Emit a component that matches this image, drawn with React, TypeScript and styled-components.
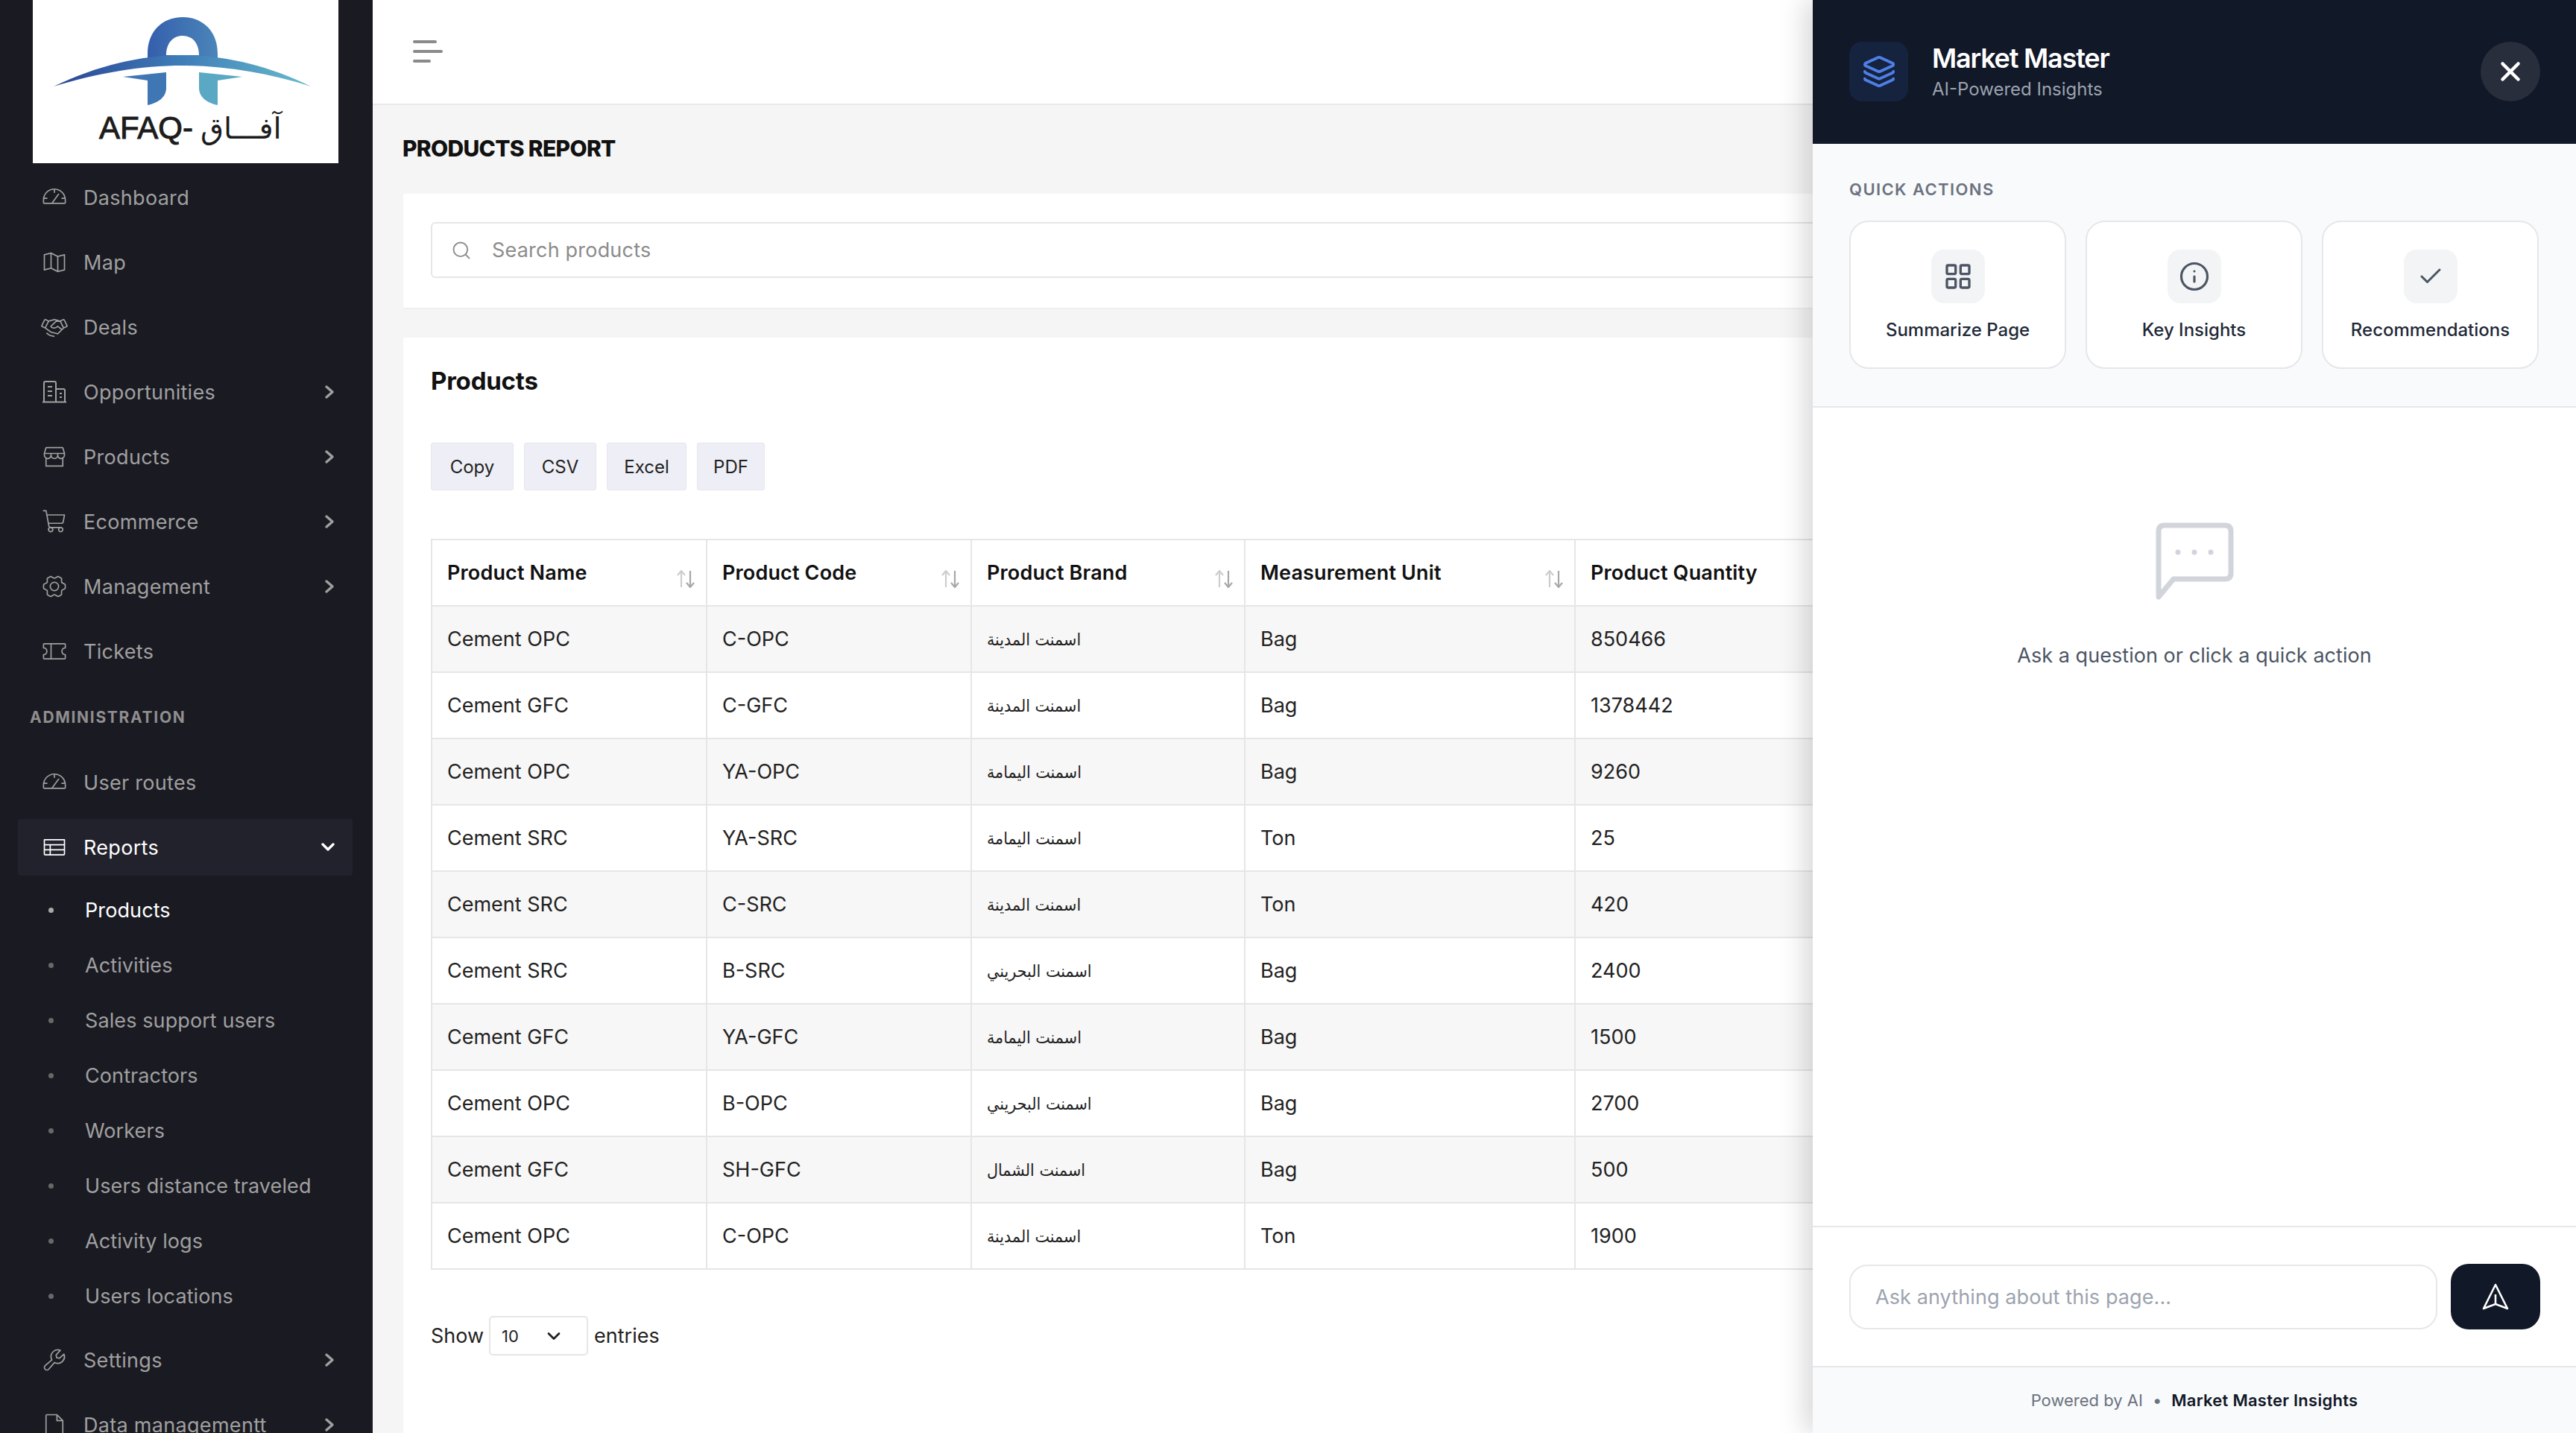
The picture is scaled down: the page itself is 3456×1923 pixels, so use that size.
import React from "react"
import styled, { createGlobalStyle } from "styled-components"
import { ChevronDown, Search, X, LayoutGrid, Info, Check, Layers } from "lucide-react"
import {
  PiGaugeLight,
  PiMapTrifoldLight,
  PiHandshakeLight,
  PiStorefrontLight,
  PiShoppingCartLight,
  PiGearSixLight,
  PiTicketLight,
  PiWrenchLight,
  PiFileLight,
  PiTableLight,
} from "react-icons/pi"

const GlobalStyle = createGlobalStyle`
  html, body {
    margin: 0;
    padding: 0;
    height: 100%;
    overflow: hidden;
    background: #f5f5f5;
    font-family: "Inter", "DejaVu Sans", sans-serif;
  }
  * { box-sizing: border-box; }
`

const Shell = styled.div`
  display: flex;
  width: 3456px;
  height: 1923px;
  overflow: hidden;
  position: relative;
`

const Sidebar = styled.aside`
  width: 500px;
  flex-shrink: 0;
  height: 100%;
  overflow: hidden;
  background: #1a1a22;
  padding: 0 27px 0 24px;
`

const LogoBox = styled.div`
  width: 410px;
  height: 219px;
  margin: 0 0 8px 20px;
  background: #fff;
`

const NavList = styled.nav`
  display: flex;
  flex-direction: column;
  gap: 11px;
`

const NavItem = styled.div<{ $active?: boolean }>`
  height: 76px;
  flex-shrink: 0;
  display: flex;
  align-items: center;
  padding: 0 24px 0 31px;
  border-radius: 4px;
  font-size: 27px;
  letter-spacing: 0.3px;
  color: ${({ $active }) => ($active ? "#ffffff" : "#a0a0a0")};
  background: ${({ $active }) => ($active ? "#22222c" : "transparent")};
`

const NavIcon = styled.span`
  width: 36px;
  height: 36px;
  margin-right: 21px;
  flex-shrink: 0;
  display: flex;
  align-items: center;
  justify-content: center;
  font-size: 36px;
`

const NavLabel = styled.span`
  flex: 1;
  white-space: nowrap;
`

const SectionLabel = styled.div`
  height: 78px;
  flex-shrink: 0;
  display: flex;
  align-items: center;
  padding-left: 16px;
  font-size: 21px;
  font-weight: 700;
  letter-spacing: 1.7px;
  color: #8f8f8f;
`

const SubList = styled.div`
  display: flex;
  flex-direction: column;
  margin-top: -2px;
`

const SubItem = styled.div<{ $active?: boolean }>`
  height: 74px;
  display: flex;
  align-items: center;
  padding-left: 41px;
  font-size: 27px;
  letter-spacing: 0.1px;
  color: ${({ $active }) => ($active ? "#ffffff" : "#a0a0a0")};
`

const SubDot = styled.span<{ $active?: boolean }>`
  width: 7px;
  height: 7px;
  border-radius: 50%;
  margin-right: 42px;
  background: ${({ $active }) => ($active ? "#a8a8a8" : "#686868")};
`

const Main = styled.main`
  flex: 1;
  min-width: 0;
  display: flex;
  flex-direction: column;
`

const TopBar = styled.header`
  height: 141px;
  flex-shrink: 0;
  background: #fff;
  border-bottom: 2px solid #e8e8e8;
  display: flex;
  align-items: center;
  padding: 0 0 2px 54px;
`

const MenuIcon = styled.div`
  display: flex;
  flex-direction: column;
  gap: 9px;
`

const MenuLine = styled.span<{ $w: number }>`
  display: block;
  height: 4px;
  border-radius: 2px;
  background: #8a8a8a;
  width: ${({ $w }) => $w}px;
`

const Content = styled.div`
  flex: 1;
  min-height: 0;
  padding: 0 40px 0 41px;
`

const PageTitle = styled.h1`
  margin: 0;
  height: 119px;
  display: flex;
  align-items: center;
  padding: 0 0 4px 0;
  font-size: 30px;
  font-weight: 800;
  letter-spacing: -0.7px;
  margin-left: -1px;
  color: #111;
`

const Card = styled.section`
  background: #fff;
  border-bottom: 2px solid #efefef;
  margin-bottom: 38px;
`

const SearchCard = styled(Card)`
  height: 155px;
  padding: 38px 37px;
`

const SearchBox = styled.div`
  height: 75px;
  border: 2px solid #e6e6e6;
  border-radius: 6px;
  display: flex;
  align-items: center;
  padding-left: 25px;
  color: #8c8c8c;
  font-size: 27px;
  letter-spacing: 0.2px;
  gap: 27px;
`

const ProductsCard = styled(Card)`
  padding: 37px 37px 0;
  height: 1500px;
`

const CardTitle = styled.h2`
  margin: 0 0 63px;
  height: 41px;
  display: flex;
  align-items: center;
  font-size: 33px;
  font-weight: 700;
  letter-spacing: -0.2px;
  color: #111;
`

const ExportRow = styled.div`
  display: flex;
  gap: 14px;
  margin-bottom: 65px;
`

const ExportButton = styled.button<{ $w: number }>`
  width: ${({ $w }) => $w}px;
  height: 64px;
  padding: 0;
  border: 1px solid #e6e6ee;
  border-radius: 3px;
  background: #eeeef6;
  color: #222;
  font-family: inherit;
  font-size: 24px;
`

const Table = styled.table`
  width: 100%;
  table-layout: fixed;
  border-collapse: collapse;
  border: 2px solid #e6e6e6;
`

const HeadCell = styled.th<{ $w?: number }>`
  width: ${({ $w }) => ($w ? `${$w}px` : "auto")};
  height: 89px;
  padding: 0 14px 0 20px;
  border: 2px solid #e6e6e6;
  text-align: left;
  font-size: 27px;
  font-weight: 600;
  letter-spacing: 0.15px;
  color: #111;
`

const HeadInner = styled.div`
  display: flex;
  justify-content: space-between;
  align-items: center;
`

const SortIcon = styled.svg`
  width: 26px;
  height: 24px;
  margin-top: 16px;
  flex-shrink: 0;
`

const Row = styled.tr<{ $odd: boolean }>`
  background: ${({ $odd }) => ($odd ? "#f7f7f7" : "#fff")};
`

const Cell = styled.td`
  height: 89px;
  padding: 0 20px;
  border: 2px solid #e6e6e6;
  font-size: 27px;
  color: #222;
  white-space: nowrap;
`

const ArabicCell = styled(Cell)`
  font-family: "DejaVu Sans Condensed", "DejaVu Sans", sans-serif;
  font-size: 23px;
`

const LengthRow = styled.div`
  margin-top: 62px;
  display: flex;
  align-items: center;
  font-size: 27px;
  color: #222;
`

const LengthSelect = styled.div`
  width: 133px;
  height: 53px;
  margin: 0 8px 0 7px;
  border: 2px solid #e6e6e6;
  border-radius: 5px;
  display: flex;
  align-items: center;
  justify-content: space-between;
  padding: 0 30px 0 15px;
  font-size: 22px;
`

const Panel = styled.aside`
  position: absolute;
  top: 0;
  right: 0;
  bottom: 0;
  width: 1024px;
  display: flex;
  flex-direction: column;
  background: #fff;
  box-shadow: -10px 0 34px rgba(0, 0, 0, 0.16);
`

const PanelHeader = styled.header`
  height: 193px;
  flex-shrink: 0;
  background: #111827;
  display: flex;
  align-items: center;
  padding: 0 48px 2px 49px;
`

const BrandIcon = styled.div`
  width: 79px;
  height: 80px;
  border-radius: 17px;
  background: #15233f;
  color: #4f7fe6;
  display: flex;
  align-items: center;
  justify-content: center;
  margin-right: 32px;
`

const BrandText = styled.div`
  flex: 1;
  display: flex;
  flex-direction: column;
  gap: 5px;
`

const BrandTitle = styled.div`
  font-size: 36px;
  font-weight: 600;
  line-height: 44px;
  letter-spacing: -1.2px;
  color: #fff;
`

const BrandSub = styled.div`
  font-size: 24px;
  line-height: 30px;
  color: #9ca3af;
`

const CloseButton = styled.div`
  width: 80px;
  height: 80px;
  border-radius: 50%;
  background: #282e3c;
  color: #fff;
  display: flex;
  align-items: center;
  justify-content: center;
`

const QuickSection = styled.section`
  height: 354px;
  flex-shrink: 0;
  background: #f9fafb;
  border-bottom: 2px solid #e5e7eb;
  padding: 48px 48px 0 49px;
`

const QuickLabel = styled.div`
  font-size: 22px;
  line-height: 26px;
  font-weight: 600;
  letter-spacing: 1.4px;
  color: #6b7280;
  margin-bottom: 29px;
`

const QuickGrid = styled.div`
  display: grid;
  grid-template-columns: repeat(3, 291px);
  gap: 26px;
`

const QuickCard = styled.div`
  height: 199px;
  background: #fff;
  border: 2px solid #e5e7eb;
  border-radius: 26px;
  display: flex;
  flex-direction: column;
  align-items: center;
  padding-top: 37px;
`

const QuickIcon = styled.div`
  width: 72px;
  height: 72px;
  border-radius: 17px;
  background: #f3f4f6;
  color: #4b5563;
  display: flex;
  align-items: center;
  justify-content: center;
  margin-bottom: 21px;
`

const QuickText = styled.div`
  font-size: 24px;
  line-height: 30px;
  font-weight: 500;
  color: #1f2937;
`

const Conversation = styled.div`
  flex: 1;
  min-height: 0;
  display: flex;
  flex-direction: column;
  align-items: center;
  padding-top: 154px;
`

const EmptyText = styled.div`
  margin-top: 56px;
  font-size: 27px;
  line-height: 34px;
  letter-spacing: 0.05px;
  color: #4b5563;
`

const Composer = styled.div`
  height: 190px;
  flex-shrink: 0;
  border-top: 2px solid #e5e7eb;
  border-bottom: 2px solid #e5e7eb;
  display: flex;
  align-items: center;
  gap: 18px;
  padding: 0 48px 0 49px;
`

const ComposerInput = styled.div`
  flex: 1;
  height: 87px;
  border: 2px solid #e5e7eb;
  border-radius: 24px;
  display: flex;
  align-items: center;
  padding-left: 33px;
  font-size: 27px;
  letter-spacing: 0.1px;
  color: #9ca3af;
`

const SendButton = styled.div`
  width: 120px;
  height: 88px;
  border-radius: 24px;
  background: #111827;
  color: #fff;
  display: flex;
  align-items: center;
  justify-content: center;
`

const PanelFooter = styled.footer`
  flex: 0 0 88px;
  background: #f9fafb;
  display: flex;
  align-items: center;
  justify-content: center;
  font-size: 22px;
  color: #6b7280;
`

const FooterStrong = styled.span`
  color: #111827;
  font-weight: 600;
  letter-spacing: 0.25px;
`

const FooterDot = styled.span`
  margin: 0 13px;
`

const Caret = ({ down }: { down?: boolean }) =>
  down ? (
    <svg width="18" height="12" viewBox="0 0 18 12" fill="none" stroke="currentColor" strokeWidth="3.4" strokeLinecap="round" strokeLinejoin="round">
      <polyline points="2,2 9,9 16,2" />
    </svg>
  ) : (
    <svg width="14" height="20" viewBox="0 0 14 20" fill="none" stroke="currentColor" strokeWidth="3.4" strokeLinecap="round" strokeLinejoin="round">
      <polyline points="3,3 11,10 3,17" />
    </svg>
  )

const BuildingsIcon = () => (
  <svg width="34" height="30" viewBox="0 0 34 30" fill="none" stroke="currentColor" strokeWidth="2">
    <path d="M1 28.5 H33" />
    <path d="M3 28.5 V3 Q3 1 5 1 H17 Q19 1 19 3 V28.5" />
    <path d="M19 11 H29 Q31 11 31 13 V28.5" />
    <path d="M8 8 H14 M8 14 H14 M8 20 H14 M24 17 H27 M24 22 H27" />
  </svg>
)

const SendIcon = () => (
  <svg width="36" height="36" viewBox="0 0 36 36" fill="none" stroke="currentColor" strokeWidth="2.6" strokeLinejoin="round">
    <path d="M18 2 L34 34 L18 28 L2 34 Z" />
    <path d="M18 15 V28" />
  </svg>
)

const Logo = () => (
  <svg width="410" height="219" viewBox="44 0 410 219">
    <defs>
      <linearGradient id="swoosh" gradientUnits="userSpaceOnUse" x1="72" y1="0" x2="417" y2="0">
        <stop offset="0" stopColor="#2a4595" />
        <stop offset="0.5" stopColor="#3f7db8" />
        <stop offset="1" stopColor="#68bccb" />
      </linearGradient>
      <linearGradient id="arch" gradientUnits="userSpaceOnUse" x1="198" y1="0" x2="292" y2="0">
        <stop offset="0" stopColor="#355fac" />
        <stop offset="1" stopColor="#4a85b9" />
      </linearGradient>
    </defs>
    <path
      fillRule="evenodd"
      fill="url(#arch)"
      d="M198 84 L198 72 C198 42 218 23 245 23 C272 23 292 42 292 72 L292 84 Z M223 74 L267 74 C267 58 258 48 245 48 C232 48 223 58 223 74 Z"
    />
    <path
      fill="url(#swoosh)"
      d="M72 116 C130 88 190 74 245 74 C300 74 360 88 417 116 C360 98 300 88 245 88 C190 88 130 98 72 116 Z"
    />
    <path fill="#3f76b4" d="M165 103 L223 97 L223 118 C223 130 213 138 198 141 L198 108 Z" />
    <path fill="#5aa8c4" d="M325 103 L267 97 L267 118 C267 130 277 138 292 141 L292 108 Z" />
    <text x="133" y="186" fontFamily="Liberation Sans, sans-serif" fontSize="42" fontWeight="500" fill="#1c1c1c" stroke="#1c1c1c" strokeWidth="1">
      AFAQ-
    </text>
    <text x="269" y="186" fontFamily="DejaVu Sans, sans-serif" fontSize="40" fill="#1c1c1c">
      آفـــاق
    </text>
  </svg>
)

const columns = [
  { label: "Product Name", width: 369 },
  { label: "Product Code", width: 355 },
  { label: "Product Brand", width: 367 },
  { label: "Measurement Unit", width: 443 },
]

const rows = [
  ["Cement OPC", "C-OPC", "اسمنت المدينة", "Bag", "850466"],
  ["Cement GFC", "C-GFC", "اسمنت المدينة", "Bag", "1378442"],
  ["Cement OPC", "YA-OPC", "اسمنت اليمامة", "Bag", "9260"],
  ["Cement SRC", "YA-SRC", "اسمنت اليمامة", "Ton", "25"],
  ["Cement SRC", "C-SRC", "اسمنت المدينة", "Ton", "420"],
  ["Cement SRC", "B-SRC", "اسمنت البحريني", "Bag", "2400"],
  ["Cement GFC", "YA-GFC", "اسمنت اليمامة", "Bag", "1500"],
  ["Cement OPC", "B-OPC", "اسمنت البحريني", "Bag", "2700"],
  ["Cement GFC", "SH-GFC", "اسمنت الشمال", "Bag", "500"],
  ["Cement OPC", "C-OPC", "اسمنت المدينة", "Ton", "1900"],
]

const reportLinks = [
  "Products",
  "Activities",
  "Sales support users",
  "Contractors",
  "Workers",
  "Users distance traveled",
  "Activity logs",
  "Users locations",
]

const SortArrows = () => (
  <SortIcon viewBox="0 0 26 24" fill="none" strokeWidth="2.2">
    <path d="M7 23 V2 M2 7 L7 1 L12 7" stroke="#cdcdcd" />
    <path d="M19 1 V22 M14 17 L19 23 L24 17" stroke="#a8a8a8" />
  </SortIcon>
)

const App: React.FC = () => {
  return (
    <Shell>
      <GlobalStyle />
      <Sidebar>
        <LogoBox>
          <Logo />
        </LogoBox>
        <NavList>
          <NavItem>
            <NavIcon><PiGaugeLight /></NavIcon>
            <NavLabel>Dashboard</NavLabel>
          </NavItem>
          <NavItem>
            <NavIcon><PiMapTrifoldLight /></NavIcon>
            <NavLabel>Map</NavLabel>
          </NavItem>
          <NavItem>
            <NavIcon><PiHandshakeLight /></NavIcon>
            <NavLabel>Deals</NavLabel>
          </NavItem>
          <NavItem>
            <NavIcon><BuildingsIcon /></NavIcon>
            <NavLabel>Opportunities</NavLabel>
            <Caret />
          </NavItem>
          <NavItem>
            <NavIcon><PiStorefrontLight /></NavIcon>
            <NavLabel>Products</NavLabel>
            <Caret />
          </NavItem>
          <NavItem>
            <NavIcon><PiShoppingCartLight /></NavIcon>
            <NavLabel>Ecommerce</NavLabel>
            <Caret />
          </NavItem>
          <NavItem>
            <NavIcon><PiGearSixLight /></NavIcon>
            <NavLabel>Management</NavLabel>
            <Caret />
          </NavItem>
          <NavItem>
            <NavIcon><PiTicketLight /></NavIcon>
            <NavLabel>Tickets</NavLabel>
          </NavItem>
          <SectionLabel>ADMINISTRATION</SectionLabel>
          <NavItem>
            <NavIcon><PiGaugeLight /></NavIcon>
            <NavLabel>User routes</NavLabel>
          </NavItem>
          <NavItem $active>
            <NavIcon><PiTableLight /></NavIcon>
            <NavLabel>Reports</NavLabel>
            <Caret down />
          </NavItem>
          <SubList>
            {reportLinks.map((link, i) => (
              <SubItem key={link} $active={i === 0}>
                <SubDot $active={i === 0} />
                {link}
              </SubItem>
            ))}
          </SubList>
          <NavItem>
            <NavIcon><PiWrenchLight /></NavIcon>
            <NavLabel>Settings</NavLabel>
            <Caret />
          </NavItem>
          <NavItem>
            <NavIcon><PiFileLight /></NavIcon>
            <NavLabel>Data managementt</NavLabel>
            <Caret />
          </NavItem>
        </NavList>
      </Sidebar>

      <Main>
        <TopBar>
          <MenuIcon>
            <MenuLine $w={32} />
            <MenuLine $w={40} />
            <MenuLine $w={24} />
          </MenuIcon>
        </TopBar>
        <Content>
          <PageTitle>PRODUCTS REPORT</PageTitle>
          <SearchCard>
            <SearchBox>
              <Search size={28} strokeWidth={1.6} />
              Search products
            </SearchBox>
          </SearchCard>
          <ProductsCard>
            <CardTitle>Products</CardTitle>
            <ExportRow>
              <ExportButton $w={111}>Copy</ExportButton>
              <ExportButton $w={97}>CSV</ExportButton>
              <ExportButton $w={107}>Excel</ExportButton>
              <ExportButton $w={91}>PDF</ExportButton>
            </ExportRow>
            <Table>
              <thead>
                <tr>
                  {columns.map((col) => (
                    <HeadCell key={col.label} $w={col.width}>
                      <HeadInner>
                        {col.label}
                        <SortArrows />
                      </HeadInner>
                    </HeadCell>
                  ))}
                  <HeadCell>Product Quantity</HeadCell>
                </tr>
              </thead>
              <tbody>
                {rows.map((row, i) => (
                  <Row key={i} $odd={i % 2 === 0}>
                    <Cell>{row[0]}</Cell>
                    <Cell>{row[1]}</Cell>
                    <ArabicCell>{row[2]}</ArabicCell>
                    <Cell>{row[3]}</Cell>
                    <Cell>{row[4]}</Cell>
                  </Row>
                ))}
              </tbody>
            </Table>
            <LengthRow>
              Show
              <LengthSelect>
                10
                <ChevronDown size={28} strokeWidth={2.4} />
              </LengthSelect>
              entries
            </LengthRow>
          </ProductsCard>
        </Content>
      </Main>

      <Panel>
        <PanelHeader>
          <BrandIcon>
            <Layers size={46} strokeWidth={2} />
          </BrandIcon>
          <BrandText>
            <BrandTitle>Market Master</BrandTitle>
            <BrandSub>AI-Powered Insights</BrandSub>
          </BrandText>
          <CloseButton>
            <X size={42} strokeWidth={2.6} />
          </CloseButton>
        </PanelHeader>
        <QuickSection>
          <QuickLabel>QUICK ACTIONS</QuickLabel>
          <QuickGrid>
            <QuickCard>
              <QuickIcon><LayoutGrid size={40} strokeWidth={2} /></QuickIcon>
              <QuickText>Summarize Page</QuickText>
            </QuickCard>
            <QuickCard>
              <QuickIcon><Info size={42} strokeWidth={1.8} /></QuickIcon>
              <QuickText>Key Insights</QuickText>
            </QuickCard>
            <QuickCard>
              <QuickIcon><Check size={36} strokeWidth={2} /></QuickIcon>
              <QuickText>Recommendations</QuickText>
            </QuickCard>
          </QuickGrid>
        </QuickSection>
        <Conversation>
          <svg width="105" height="106" viewBox="0 0 105 106" fill="none" stroke="#d1d5db" strokeWidth="7" strokeLinejoin="round">
            <path d="M4 100 V12 Q4 4 12 4 H93 Q101 4 101 12 V68 Q101 76 93 76 H24 Z" />
            <circle cx="30" cy="40" r="3.5" fill="#d1d5db" stroke="none" />
            <circle cx="52" cy="40" r="3.5" fill="#d1d5db" stroke="none" />
            <circle cx="74" cy="40" r="3.5" fill="#d1d5db" stroke="none" />
          </svg>
          <EmptyText>Ask a question or click a quick action</EmptyText>
        </Conversation>
        <Composer>
          <ComposerInput>Ask anything about this page...</ComposerInput>
          <SendButton>
            <SendIcon />
          </SendButton>
        </Composer>
        <PanelFooter>
          Powered by AI
          <FooterDot>•</FooterDot>
          <FooterStrong>Market Master Insights</FooterStrong>
        </PanelFooter>
      </Panel>
    </Shell>
  )
}

export default App
